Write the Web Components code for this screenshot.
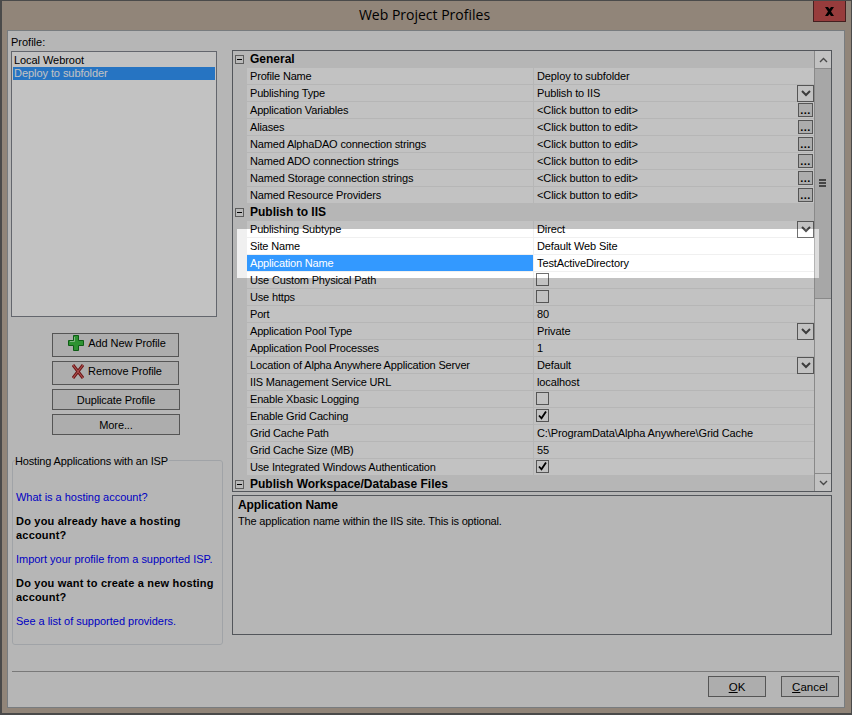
<!DOCTYPE html>
<html>
<head>
<meta charset="utf-8">
<title>Web Project Profiles</title>
<style>
  html, body { margin: 0; padding: 0; background: #bfaf9f; overflow: hidden; }
  body { font: 11px/14px "Liberation Sans", Arial, sans-serif; color: #000; }
</style>
</head>
<body>
<wp-dialog heading="Web Project Profiles">
  <wp-sidebar slot="side">
    <wp-list-item>Local Webroot</wp-list-item>
    <wp-list-item selected>Deploy to subfolder</wp-list-item>
    <wp-button slot="actions" icon="plus" tall>Add New Profile</wp-button>
    <wp-button slot="actions" icon="cross" tall>Remove Profile</wp-button>
    <wp-button slot="actions">Duplicate Profile</wp-button>
    <wp-button slot="actions">More...</wp-button>
  </wp-sidebar>
  <wp-property-grid slot="main">
    <wp-category>General</wp-category>
    <wp-row label="Profile Name" value="Deploy to subfolder"></wp-row>
    <wp-row label="Publishing Type" value="Publish to IIS" editor="drop"></wp-row>
    <wp-row label="Application Variables" value="&lt;Click button to edit&gt;" editor="dots"></wp-row>
    <wp-row label="Aliases" value="&lt;Click button to edit&gt;" editor="dots"></wp-row>
    <wp-row label="Named AlphaDAO connection strings" value="&lt;Click button to edit&gt;" editor="dots"></wp-row>
    <wp-row label="Named ADO connection strings" value="&lt;Click button to edit&gt;" editor="dots"></wp-row>
    <wp-row label="Named Storage connection strings" value="&lt;Click button to edit&gt;" editor="dots"></wp-row>
    <wp-row label="Named Resource Providers" value="&lt;Click button to edit&gt;" editor="dots"></wp-row>
    <wp-category>Publish to IIS</wp-category>
    <wp-row label="Publishing Subtype" value="Direct" editor="drop"></wp-row>
    <wp-row label="Site Name" value="Default Web Site"></wp-row>
    <wp-row label="Application Name" value="TestActiveDirectory" selected></wp-row>
    <wp-row label="Use Custom Physical Path" check="off"></wp-row>
    <wp-row label="Use https" check="off"></wp-row>
    <wp-row label="Port" value="80"></wp-row>
    <wp-row label="Application Pool Type" value="Private" editor="drop"></wp-row>
    <wp-row label="Application Pool Processes" value="1"></wp-row>
    <wp-row label="Location of Alpha Anywhere Application Server" value="Default" editor="drop"></wp-row>
    <wp-row label="IIS Management Service URL" value="localhost"></wp-row>
    <wp-row label="Enable Xbasic Logging" check="off"></wp-row>
    <wp-row label="Enable Grid Caching" check="on"></wp-row>
    <wp-row label="Grid Cache Path" value="C:\ProgramData\Alpha Anywhere\Grid Cache"></wp-row>
    <wp-row label="Grid Cache Size (MB)" value="55"></wp-row>
    <wp-row label="Use Integrated Windows Authentication" check="on"></wp-row>
    <wp-category>Publish Workspace/Database Files</wp-category>
  </wp-property-grid>
  <wp-description slot="main" heading="Application Name">The application name within the IIS site. This is optional.</wp-description>
  <wp-button slot="footer" wide><u>O</u>K</wp-button>
  <wp-button slot="footer" wide><u>C</u>ancel</wp-button>
</wp-dialog>

<script>
  class WpDialog extends HTMLElement {
    constructor() {
      super();
      this.attachShadow({ mode: "open" });
      this.shadowRoot.innerHTML = `
        <style>
          :host {
            display: flex;
            flex-direction: column;
            position: relative;
            box-sizing: border-box;
            width: 852px;
            height: 715px;
            overflow: hidden;
            background: #bfaf9f;
            border: solid #4a4a4a;
            border-width: 1px 1px 2px 2px;
          }
          #title {
            height: 29px;
            display: flex;
            justify-content: center;
            align-items: center;
            flex: none;
            padding: 0 4px 1px 0;
            box-sizing: border-box;
            font: 14px/20px "Open Sans", sans-serif;
            color: #000;
          }
          #close {
            position: absolute;
            top: 0;
            right: 5px;
            width: 33px;
            height: 21px;
            box-sizing: border-box;
            background: #c75050;
            border: 1px solid #5a2a2a;
            border-top: 0;
            display: flex;
            align-items: center;
            justify-content: center;
          }
          #client {
            flex: 1;
            margin: 0 6px 5px 5px;
            box-sizing: border-box;
            background: #f0f0f0;
            border: 1px solid #9ea3a8;
            display: grid;
            grid-template-columns: 221px 600px 1fr;
            grid-template-rows: 636px 1fr;
            padding-left: 3px;
          }
          #main {
            padding-top: 19px;
            display: flex;
            flex-direction: column;
            gap: 3px;
          }
          #footer {
            grid-column: 1 / 4;
            margin: 4px 4px 0 1px;
            border-top: 1px solid #a0a0a0;
            display: flex;
            justify-content: flex-end;
            gap: 15px;
            padding: 4px 1px 0 0;
          }
          #spot {
            position: absolute;
            left: 235px;
            top: 228px;
            width: 582px;
            height: 49px;
            box-shadow: 0 0 0 1400px rgba(0, 0, 0, .24);
            pointer-events: none;
          }
        </style>
        <div id="title"><span></span></div>
        <div id="close">
          <svg width="13" height="11" viewBox="0 0 13 11"><path d="M2 1h3l1.500 2 1.500-2h3L8 5.500 11 10H8L6.500 8 5 10H2l3-4.500z" fill="#000"/></svg>
        </div>
        <div id="client">
          <slot name="side"></slot>
          <div id="main"><slot name="main"></slot></div>
          <div></div>
          <div id="footer"><slot name="footer"></slot></div>
        </div>
        <div id="spot"></div>
      `;
      this.shadowRoot.querySelector("#title span").textContent = this.getAttribute("heading");
    }
  }

  class WpSidebar extends HTMLElement {
    constructor() {
      super();
      this.attachShadow({ mode: "open" });
      this.shadowRoot.innerHTML = `
        <style>
          :host {
            display: block;
          }
          #caption {
            padding-top: 4px;
            height: 16px;
          }
          #list {
            box-sizing: border-box;
            width: 206px;
            height: 266px;
            background: #fff;
            border: 1px solid #828790;
            padding: 2px 1px 1px;
          }
          #actions {
            display: flex;
            flex-direction: column;
            gap: 4px;
            margin: 16px 0 0 41px;
            width: 128px;
          }
        </style>
        <div id="caption">Profile:</div>
        <div id="list"><slot></slot></div>
        <div id="actions"><slot name="actions"></slot></div>
        <wp-hosting></wp-hosting>
      `;
    }
  }

  class WpListItem extends HTMLElement {
    constructor() {
      super();
      this.attachShadow({ mode: "open" });
      this.shadowRoot.innerHTML = `
        <style>
          :host {
            display: block;
            height: 13px;
            padding-left: 1px;
            line-height: 13px;
            letter-spacing: -.06px;
          }
          :host([selected]) {
            background: #3399ff;
            color: #fff;
          }
        </style>
        <slot></slot>
      `;
    }
  }

  const ICONS = {
    plus: `<svg width="16" height="16" viewBox="0 0 16 16"><path d="M5.500 .5h5v5h5v5h-5v5h-5v-5h-5v-5h5z" fill="#3cc041" stroke="#127a1c"/><path d="M6.500 2v4.500H2" fill="none" stroke="#a8eeaa"/></svg>`,
    cross: `<svg width="12" height="15" viewBox="0 0 12 15"><path d="M1 1 11 14M11 1 1 14" fill="none" stroke="#8c1f1f" stroke-width="3"/><path d="M1 1 11 14M11 1 1 14" fill="none" stroke="#e86a6a" stroke-width="1.100"/></svg>`
  };

  class WpButton extends HTMLElement {
    constructor() {
      super();
      this.attachShadow({ mode: "open" });
      this.shadowRoot.innerHTML = `
        <style>
          :host {
            display: flex;
            align-items: center;
            justify-content: center;
            box-sizing: border-box;
            height: 21px;
            background: #e4e4e4;
            border: 1px solid #707070;
            letter-spacing: -.1px;
          }
          :host([tall]) {
            height: 24px;
            width: 127px;
            padding: 0 0 4px 3px;
          }
          :host([wide]) {
            width: 58px;
            font-size: 11.500px;
            letter-spacing: 0;
          }
          svg { display: block; }
          #icon { display: flex; margin-right: 4px; }
        </style>
        <span id="icon"></span><span><slot></slot></span>
      `;
      const icon = this.shadowRoot.getElementById("icon");
      const name = this.getAttribute("icon");
      if (name) {
        icon.innerHTML = ICONS[name];
      } else {
        icon.remove();
      }
    }
  }

  class WpHosting extends HTMLElement {
    constructor() {
      super();
      this.attachShadow({ mode: "open" });
      this.shadowRoot.innerHTML = `
        <style>
          :host {
            display: block;
            position: relative;
            box-sizing: border-box;
            width: 211px;
            height: 185px;
            margin: 25px 0 0 1px;
            border: 1px solid #d3d7dc;
            border-radius: 3px;
            padding: 29px 3px 0;
          }
          #legend {
            position: absolute;
            top: -7px;
            left: 2px;
            background: #f0f0f0;
            padding-right: 1px;
            letter-spacing: -.15px;
          }
          p { margin: 0; }
          .link { color: #0000ff; letter-spacing: -.02px; }
          .q { font-weight: bold; letter-spacing: .2px; margin: 10px 0; }
        </style>
        <div id="legend">Hosting Applications with an ISP</div>
        <p class="link">What is a hosting account?</p>
        <p class="q">Do you already have a hosting account?</p>
        <p class="link">Import your profile from a supported ISP.</p>
        <p class="q">Do you want to create a new hosting account?</p>
        <p class="link">See a list of supported providers.</p>
      `;
    }
  }

  class WpPropertyGrid extends HTMLElement {
    constructor() {
      super();
      this.attachShadow({ mode: "open" });
      this.shadowRoot.innerHTML = `
        <style>
          :host {
            display: flex;
            box-sizing: border-box;
            width: 600px;
            height: 442px;
            flex: none;
            background: #f0f0f0;
            border: 1px solid #6d7178;
            overflow: hidden;
          }
          #rows {
            flex: 1;
            min-width: 0;
            overflow: hidden;
          }
          #bar {
            flex: none;
            width: 17px;
            box-sizing: border-box;
            display: flex;
            flex-direction: column;
            background: #fdfdfd;
            border: 1px solid #b4b4b4;
            border-width: 0 0 0 1px;
          }
          .end {
            height: 17px;
            flex: none;
            display: flex;
            align-items: center;
            justify-content: center;
            background: #ffffff;
            border-bottom: 1px solid #b8b8b8;
          }
          .end:last-child {
            border-bottom: 0;
            border-top: 1px solid #b4b4b4;
          }
          #thumb {
            height: 230px;
            flex: none;
            box-sizing: border-box;
            background: #dcdcdc;
            border-bottom: 1px solid #b4b4b4;
            display: flex;
            align-items: center;
            justify-content: center;
            padding-right: 2px;
          }
          #track { flex: 1; }
        </style>
        <div id="rows"><slot></slot></div>
        <div id="bar">
          <div class="end"><svg width="9" height="6" viewBox="0 0 9 6"><path d="M1 5l3.500-3.500L8 5" fill="none" stroke="#606060" stroke-width="1.400"/></svg></div>
          <div id="thumb"><svg width="7" height="9" viewBox="0 0 7 9"><path d="M0 1h7M0 4h7M0 7h7" stroke="#5c5c5c" stroke-width="2"/></svg></div>
          <div id="track"></div>
          <div class="end"><svg width="9" height="6" viewBox="0 0 9 6"><path d="M1 1l3.500 3.500L8 1" fill="none" stroke="#606060" stroke-width="1.400"/></svg></div>
        </div>
      `;
    }
  }

  class WpCategory extends HTMLElement {
    constructor() {
      super();
      this.attachShadow({ mode: "open" });
      this.shadowRoot.innerHTML = `
        <style>
          :host {
            display: flex;
            align-items: center;
            box-sizing: border-box;
            height: 17px;
            padding-bottom: 1px;
            font-size: 12px;
            font-weight: bold;
          }
          #toggle {
            box-sizing: border-box;
            width: 9px;
            height: 9px;
            margin: 0 6px 0 2px;
            border: 1px solid #7a7a7a;
            background: #f4f4f4;
            display: flex;
            align-items: center;
            justify-content: center;
          }
          #toggle i {
            width: 5px;
            height: 1px;
            background: #000;
          }
        </style>
        <div id="toggle"><i></i></div>
        <span><slot></slot></span>
      `;
    }
  }

  class WpRow extends HTMLElement {
    constructor() {
      super();
      this.attachShadow({ mode: "open" });
      this.shadowRoot.innerHTML = `
        <style>
          :host {
            display: flex;
            height: 16px;
            margin: 0 0 1px 14px;
            background: #fff;
            line-height: 16px;
            letter-spacing: -.17px;
          }
          #label {
            width: 286px;
            flex: none;
            box-sizing: border-box;
            padding-left: 3px;
            margin-right: 1px;
            white-space: nowrap;
          }
          :host([selected]) #label {
            background: #3399ff;
            color: #fff;
          }
          #value {
            flex: 1;
            padding-left: 3px;
            white-space: nowrap;
            border-left: 1px solid #f0f0f0;
            margin-left: -1px;
            letter-spacing: -.12px;
          }
          #check {
            box-sizing: border-box;
            width: 13px;
            height: 13px;
            margin: 1px 0 0 -1px;
            border: 1px solid #707070;
            background: #fff;
          }
          #check svg { display: block; }
          .drop {
            flex: none;
            box-sizing: border-box;
            width: 17px;
            height: 17px;
            border: 1px solid #707070;
            background: #fff;
            display: flex;
            align-items: center;
            justify-content: center;
          }
          .dots {
            flex: none;
            box-sizing: border-box;
            width: 15px;
            height: 14px;
            margin: 1px 1px 0 0;
            border: 1px solid #707070;
            background: #e4e4e4;
            font: bold 11px/13px "Liberation Sans", sans-serif;
            text-align: center;
            letter-spacing: .5px;
            color: #000;
          }
        </style>
        <div id="label"></div>
        <div id="value"></div>
      `;
      const root = this.shadowRoot;
      root.getElementById("label").textContent = this.getAttribute("label");
      const value = root.getElementById("value");
      const check = this.getAttribute("check");
      if (check) {
        value.innerHTML = `<div id="check">${check === "on"
          ? '<svg width="11" height="11" viewBox="0 0 11 11"><path d="M2 5.500l2.500 2.800L9 1.500" fill="none" stroke="#000" stroke-width="1.800"/></svg>'
          : ""}</div>`;
      } else {
        value.textContent = this.getAttribute("value");
      }
      const editor = this.getAttribute("editor");
      if (editor === "drop") {
        const btn = document.createElement("div");
        btn.className = "drop";
        btn.innerHTML = '<svg width="10" height="7" viewBox="0 0 10 7"><path d="M1 1l4 4 4-4" fill="none" stroke="#505050" stroke-width="2"/></svg>';
        root.appendChild(btn);
      } else if (editor === "dots") {
        const btn = document.createElement("div");
        btn.className = "dots";
        btn.textContent = "...";
        root.appendChild(btn);
      }
    }
  }

  class WpDescription extends HTMLElement {
    constructor() {
      super();
      this.attachShadow({ mode: "open" });
      this.shadowRoot.innerHTML = `
        <style>
          :host {
            display: block;
            box-sizing: border-box;
            width: 600px;
            height: 140px;
            flex: none;
            border: 1px solid #6d7178;
            padding: 2px 5px;
            letter-spacing: -.17px;
          }
          #heading {
            font-weight: bold;
            font-size: 12px;
            height: 16px;
            line-height: 14px;
            letter-spacing: -.1px;
          }
        </style>
        <div id="heading"></div>
        <slot></slot>
      `;
      this.shadowRoot.getElementById("heading").textContent = this.getAttribute("heading");
    }
  }

  customElements.define("wp-dialog", WpDialog);
  customElements.define("wp-sidebar", WpSidebar);
  customElements.define("wp-list-item", WpListItem);
  customElements.define("wp-button", WpButton);
  customElements.define("wp-hosting", WpHosting);
  customElements.define("wp-property-grid", WpPropertyGrid);
  customElements.define("wp-category", WpCategory);
  customElements.define("wp-row", WpRow);
  customElements.define("wp-description", WpDescription);
</script>
</body>
</html>
